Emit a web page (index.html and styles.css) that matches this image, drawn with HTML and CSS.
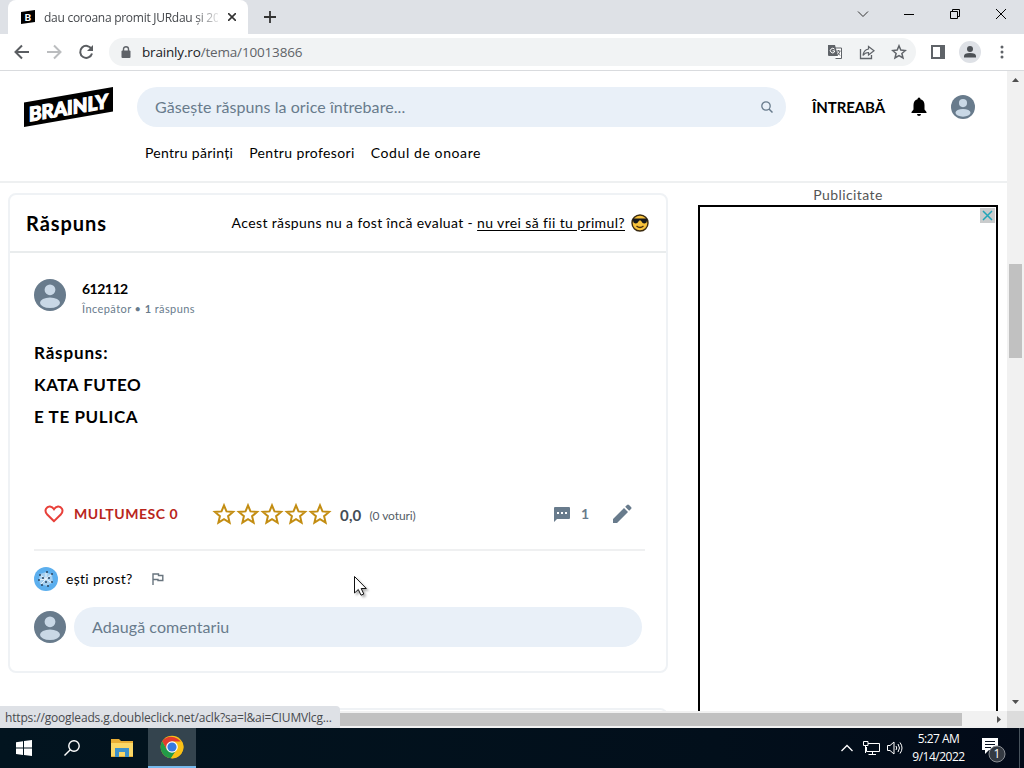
FILE: index.html
```html
<!DOCTYPE html>
<html lang="ro">
<head>
    <meta charset="UTF-8">
    <meta name="viewport" content="width=device-width, initial-scale=1.0">
    <title>dau coroana promit JURdau și 20</title>
    <link rel="stylesheet" href="styles.css">
</head>
<body>
    <svg width="0" height="0" class="defs">
        <symbol id="avatar" viewBox="0 0 32 32">
            <circle cx="16" cy="16" r="16" fill="#687b8c"/>
            <circle cx="16" cy="10.8" r="5.4" fill="#c9d8e6"/>
            <ellipse cx="16" cy="23.8" rx="10" ry="5.2" fill="#c9d8e6"/>
        </symbol>
        <symbol id="star" viewBox="0 0 24 24">
            <path d="M12 3.4l2.5 6 6.6.5-5 4.3 1.5 6.4-5.6-3.4-5.6 3.4 1.5-6.4-5-4.3 6.6-.5z" fill="none" stroke="#c38d12" stroke-width="2"/>
        </symbol>
    </svg>

    <div class="tab-strip">
        <div class="tab">
            <svg class="favicon" width="14" height="14" viewBox="0 0 14 14">
                <path d="M0 2L14 0V12L0 14Z" fill="#000"/>
                <text x="3.5" y="10.6" font-family="Lato" font-weight="900" font-size="10" fill="#fff">B</text>
            </svg>
            <span class="tab-title">dau coroana promit JURdau și 20</span>
            <svg class="tab-close" width="8" height="8" viewBox="0 0 8 8"><path d="M0 0L8 8M8 0L0 8" stroke="#333" stroke-width="1.6"/></svg>
        </div>
        <svg class="new-tab" width="12" height="12" viewBox="0 0 12 12"><path d="M6 0V12M0 6H12" stroke="#333" stroke-width="1.8"/></svg>
        <div class="window-buttons">
            <svg width="46" height="28" viewBox="0 0 46 28"><path d="M18 11.5L23 16.5L28 11.5" fill="none" stroke="#333"/></svg>
            <svg width="46" height="28" viewBox="0 0 46 28"><path d="M18 14.5H28" stroke="#000"/></svg>
            <svg width="46" height="28" viewBox="0 0 46 28"><path d="M18.5 11.5H25.500V18.500H18.500ZM20.500 11.500V9.500H27.500V16.500H25.500" fill="none" stroke="#000"/></svg>
            <svg width="46" height="28" viewBox="0 0 46 28"><path d="M18 9L28 19M28 9L18 19" stroke="#000"/></svg>
        </div>
    </div>

    <div class="toolbar">
        <svg width="16" height="16" viewBox="0 0 16 16"><path d="M15 8H2M8 1.500L1.500 8L8 14.500" fill="none" stroke="#5a5d61" stroke-width="2"/></svg>
        <svg width="16" height="16" viewBox="0 0 16 16"><path d="M1 8H14M8 1.500L14.500 8L8 14.500" fill="none" stroke="#bbbdbf" stroke-width="2"/></svg>
        <svg width="16" height="16" viewBox="0 0 16 16"><path d="M13.500 5A6 6 0 1 0 14 9.500" fill="none" stroke="#5a5d61" stroke-width="2"/><path d="M15 1V7H9Z" fill="#5a5d61"/></svg>
        <div class="address-bar">
            <svg class="lock" width="10" height="12" viewBox="0 0 10 12"><rect y="4.500" x=".5" width="9" height="7.500" rx="1" fill="#5f6368"/><path d="M2.500 5V3a2.500 2.300 0 0 1 5 0V5" fill="none" stroke="#5f6368" stroke-width="1.400"/></svg>
            <span class="url"><b>brainly.ro</b>/tema/10013866</span>
            <div class="address-icons">
                <svg width="16" height="16" viewBox="0 0 16 16">
                    <path d="M8 4H14.500V14.500H8.500" fill="#fff" stroke="#5f6368"/>
                    <path d="M1 1H8L11 12H2Q1 12 1 11Z" fill="#5f6368"/>
                    <path d="M7.500 5.200A2.300 2.300 0 1 0 7.500 8V6.800H5.500" fill="none" stroke="#fff"/>
                    <path d="M9.500 7H13.500M11.500 6V7M13 7Q12 10 10.500 11M10.500 8.500L13 11.500" fill="none" stroke="#5f6368"/>
                </svg>
                <svg width="16" height="16" viewBox="0 0 16 16"><path d="M1.500 5V14.500H12.500V11" fill="none" stroke="#5f6368" stroke-width="1.300"/><path d="M9.500 2.500L15 6.800L9.500 11V8.500Q6 8.500 4 11.500Q4.500 6 9.500 5Z" fill="none" stroke="#5f6368" stroke-width="1.200"/></svg>
                <svg width="16" height="16" viewBox="0 0 16 16"><path d="M8 1.800l1.800 4.300 4.600.4-3.500 3 1.100 4.500-4-2.400-4 2.400 1.100-4.500-3.500-3 4.600-.4z" fill="none" stroke="#5f6368" stroke-width="1.500"/></svg>
            </div>
        </div>
        <svg class="side-panel" width="14" height="14" viewBox="0 0 14 14"><path d="M1 1H13V13H1Z" fill="none" stroke="#5f6368" stroke-width="2"/><path d="M9 0H14V14H9Z" fill="#5f6368"/></svg>
        <svg class="profile" width="22" height="22" viewBox="0 0 22 22"><circle cx="11" cy="11" r="11" fill="#dee1e6"/><circle cx="11" cy="8" r="3" fill="#4d5156"/><path d="M5 16.500V15Q5 12 11 12T17 15V16.500Z" fill="#4d5156"/></svg>
        <svg class="menu" width="4" height="14" viewBox="0 0 4 14" fill="#5f6368"><circle cx="2" cy="2" r="1.500"/><circle cx="2" cy="7" r="1.500"/><circle cx="2" cy="12" r="1.500"/></svg>
    </div>

    <div class="viewport">
        <div class="page">
            <header class="site-header">
                <div class="header-top">
                    <svg class="logo" width="90" height="40" viewBox="0 0 90 40">
                        <path d="M0 15.500L89 0V24.500L0 40Z" fill="#000"/>
                        <text transform="translate(5 34.500) skewY(-9.800)" textLength="79" lengthAdjust="spacingAndGlyphs" font-family="Lato" font-weight="900" font-size="19.500" fill="#fff" stroke="#fff" stroke-width="1.200">BRAINLY</text>
                    </svg>
                    <div class="search">
                        <span>Găsește răspuns la orice întrebare...</span>
                        <svg width="12" height="12" viewBox="0 0 12 12"><circle cx="5" cy="5" r="4.200" fill="none" stroke="#687b8c" stroke-width="1.300"/><path d="M8 8L11.500 11.500" stroke="#687b8c" stroke-width="1.500"/></svg>
                    </div>
                    <span class="ask">ÎNTREABĂ</span>
                    <svg class="bell" width="16" height="20" viewBox="0 0 16 20"><path d="M8 .5Q9.500 .5 9.500 2.200Q13.500 3.500 13.500 8V12.500L15.500 15V16H.5V15L2.500 12.500V8Q2.500 3.500 6.500 2.200Q6.500 .5 8 .5ZM6 17H10Q10 19 8 19T6 17Z"/></svg>
                    <svg width="24" height="24"><use href="#avatar"/></svg>
                </div>
                <nav class="links">
                    <span class="link-parents">Pentru părinți</span>
                    <span class="link-teachers">Pentru profesori</span>
                    <span class="link-honor">Codul de onoare</span>
                </nav>
            </header>

            <div class="columns">
                <main>
                    <div class="answer">
                        <div class="answer-header">
                            <h2>Răspuns</h2>
                            <p class="rate-hint">Acest răspuns nu a fost încă evaluat - <u>nu vrei să fii tu primul?</u></p>
                            <svg class="emoji" width="18" height="18" viewBox="0 0 18 18">
                                <circle cx="9" cy="9" r="8" fill="#f9c33c" stroke="#3a2a10" stroke-width="1.400"/>
                                <path d="M1.500 4.500H16.500L15.500 8.500Q12 11 9.800 6.500H8.200Q6 11 2.500 8.500Z" fill="#17191c"/>
                                <path d="M5.500 12Q9 15 12.500 12" fill="none" stroke="#4b3210" stroke-width="1.300"/>
                            </svg>
                        </div>
                        <div class="answer-body">
                            <div class="author">
                                <svg width="32" height="32"><use href="#avatar"/></svg>
                                <div>
                                    <div class="author-name">612112</div>
                                    <div class="author-rank">Începător • <b>1</b> răspuns</div>
                                </div>
                            </div>
                            <div class="answer-text">
                                <p class="line-1">Răspuns:</p>
                                <p class="line-2">KATA FUTEO</p>
                                <p class="line-3">E TE PULICA</p>
                            </div>
                            <div class="actions">
                                <svg class="heart" width="20" height="18" viewBox="0 0 20 18"><path d="M10 16.200L3 9.200C-.5 5 3 1.200 6 1.500Q8.500 1.800 10 4.200Q11.500 1.800 14 1.500C17 1.200 20.500 5 17 9.200Z" fill="none" stroke="#e8403a" stroke-width="2"/></svg>
                                <span class="thanks">MULȚUMESC 0</span>
                                <div class="stars">
                                    <svg width="24" height="24"><use href="#star"/></svg>
                                    <svg width="24" height="24"><use href="#star"/></svg>
                                    <svg width="24" height="24"><use href="#star"/></svg>
                                    <svg width="24" height="24"><use href="#star"/></svg>
                                    <svg width="24" height="24"><use href="#star"/></svg>
                                </div>
                                <span class="score">0,0</span>
                                <span class="votes">(0 voturi)</span>
                                <svg class="bubble" width="16" height="16" viewBox="0 0 16 16"><path d="M1 1H15Q16 1 16 2V12Q16 13 15 13H3L0 16V2Q0 1 1 1Z" fill="#687b8c"/><path d="M3 6H5V8H3ZM7 6H9V8H7ZM11 6H13V8H11Z" fill="#fff"/></svg>
                                <span class="comment-count">1</span>
                                <svg class="pencil" width="20" height="20" viewBox="0 0 20 20"><path d="M1 15L12 4L16 8L5 19H1ZM13.200 2.800L15 1Q16 0 17 1L19 3Q20 4 19 5L17.200 6.800Z" fill="#687b8c"/></svg>
                            </div>
                            <div class="comment">
                                <svg width="24" height="24" viewBox="0 0 24 24">
                                    <circle cx="12" cy="12" r="12" fill="#5cafee"/>
                                    <path d="M6 7L12 5L18 8L19 15L13 19L6 17L5 12Z" fill="#a5d0f1"/>
                                    <path d="M6 8L12 12L18 7M12 12L18 16M12 12L7 17M12 12V6M12 12L5 13" fill="none" stroke="#e8f2fa"/>
                                    <g fill="#29435f"><circle cx="6" cy="8" r="1"/><circle cx="13" cy="5" r="1"/><circle cx="18" cy="7" r="1"/><circle cx="9" cy="11" r="1"/><circle cx="15" cy="11" r="1"/><circle cx="5" cy="13" r="1"/><circle cx="12" cy="15" r="1"/><circle cx="18" cy="15" r="1"/><circle cx="8" cy="18" r="1"/><circle cx="14" cy="19" r="1"/></g>
                                </svg>
                                <span>ești prost?</span>
                                <svg class="flag" width="12" height="12" viewBox="0 0 12 12"><path d="M1 12V1H6.500V2.500H10.800V7.500H6V6.500H1" fill="none" stroke="#68747e" stroke-width="1.400"/></svg>
                            </div>
                            <div class="add-comment">
                                <svg width="32" height="32"><use href="#avatar"/></svg>
                                <div class="comment-input"><span>Adaugă comentariu</span></div>
                            </div>
                        </div>
                    </div>
                    <div class="next-box"></div>
                </main>
                <aside class="ad">
                    <div class="ad-label">Publicitate</div>
                    <div class="ad-frame">
                        <svg width="15" height="15" viewBox="0 0 15 15"><path d="M0 0H15V15H0Z" fill="#c9cbcc"/><path d="M3 3L12 12M12 3L3 12" stroke="#20a5b8" stroke-width="1.500"/></svg>
                    </div>
                </aside>
            </div>
        </div>
        <div class="scroll-y">
            <svg width="17" height="17" viewBox="0 0 17 17"><path d="M5 11L8.500 7L12 11Z" fill="#505050"/></svg>
            <div class="thumb-y"></div>
            <svg class="down" width="17" height="17" viewBox="0 0 17 17"><path d="M5 6L8.500 10L12 6Z" fill="#505050"/></svg>
        </div>
        <div class="scroll-x">
            <div class="thumb-x"></div>
            <svg width="17" height="17" viewBox="0 0 17 17"><path d="M7 5L11 8.500L7 12Z" fill="#505050"/></svg>
        </div>
        <div class="corner"></div>
        <div class="status"><span>https://googleads.g.doubleclick.net/aclk?sa=l&amp;ai=CIUMVlcg...</span></div>
        <svg class="cursor" width="18" height="24" viewBox="0 0 18 24"><path d="M.5 .5V17L4.300 13.500L7 19.200L9.800 18L7.200 12.500H12.300Z" fill="#fff" stroke="#111"/></svg>
    </div>

    <footer class="taskbar">
        <div class="task"><svg width="16" height="16" viewBox="0 0 16 16" fill="#fff"><path d="M0 2.200L7 1.200V7.600H0ZM8 1L16 0V7.600H8ZM0 8.500H7V15L0 14ZM8 8.500H16V16L8 15Z"/></svg></div>
        <div class="task"><svg width="16" height="16" viewBox="0 0 16 16" fill="none" stroke="#fff" stroke-width="1.400"><circle cx="10" cy="6" r="5.200"/><path d="M6.300 9.700L.5 15.500"/></svg></div>
        <div class="task files"><svg class="folder" width="22" height="18" viewBox="0 0 22 18"><path d="M0 0H8L10 2H22V18H0Z" fill="#e9ae35"/><path d="M0 4H22V17H0Z" fill="#fbd766"/><path d="M4 9H18V18H14V13H8V18H4Z" fill="#3e91ca"/></svg></div>
        <div class="task active"><svg width="24" height="24" viewBox="0 0 24 24">
            <circle cx="12" cy="12" r="11.300" fill="#fbc116"/>
            <path d="M12 12H22.500A11.300 11.300 0 0 0 2.200 6.300L6.800 15Z" fill="#e33b2e"/>
            <path d="M2.200 6.300A11.300 11.300 0 0 0 11 23.300L16.800 14.500L12 12L7 15Z" fill="#229b48"/>
            <path d="M12 6.500H22A11.300 11.300 0 0 1 11 23.300L16.800 14.500Z" fill="#fbc116"/>
            <circle cx="12" cy="12" r="5.800" fill="#fff"/><circle cx="12" cy="12" r="4.600" fill="#3779e0"/>
        </svg></div>
        <div class="tray">
            <svg class="chevron" width="12" height="8" viewBox="0 0 12 8"><path d="M.5 7L6 1.500L11.500 7" fill="none" stroke="#fff" stroke-width="1.300"/></svg>
            <svg class="network" width="17" height="15" viewBox="0 0 17 15"><path d="M5 2.500H16.500V10.500H3.500V6M.5 .5H5V4.500H.5ZM2.500 4.500V12M9.500 10.500V13.500M5.500 13.500H13" fill="none" stroke="#fff"/></svg>
            <svg class="volume" width="16" height="14" viewBox="0 0 16 14"><path d="M.5 4.500H3L7 1V13L3 9.500H.5ZM9 5Q10.500 7 9 9M11 3Q14 7 11 11M13 1.500Q17 7 13 12.500" fill="none" stroke="#fff"/></svg>
            <div class="clock"><span class="time">5:27 AM</span><span class="date">9/14/2022</span></div>
            <svg class="notify" width="26" height="26" viewBox="0 0 26 26">
                <path d="M1 1H17V13H8L4 17V13H1Z" fill="#fff"/><path d="M4 4.500H14M4 7.500H14M4 10.500H10" stroke="#06101f"/>
                <circle cx="16" cy="17" r="8" fill="#343a42" stroke="#8b8f95"/>
                <text x="16" y="21.300" text-anchor="middle" font-family="Open Sans" font-size="12" fill="#fff">1</text>
            </svg>
            <div class="show-desktop"></div>
        </div>
    </footer>
</body>
</html>
```
FILE: styles.css
```css
* {
    box-sizing: border-box;
}
body {
    margin: 0;
    width: 1024px;
    height: 768px;
    overflow: hidden;
    display: flex;
    flex-direction: column;
    background: #fff;
    font-family: Lato, "Liberation Sans", sans-serif;
    color: #000;
}
svg {
    display: block;
    flex-shrink: 0;
}
span, p, h2 {
    white-space: nowrap;
}
.defs {
    position: absolute;
}

/* browser */
.tab-strip {
    display: flex;
    height: 34px;
    background: #dee1e6;
    font-family: "Open Sans", sans-serif;
}
.tab {
    display: flex;
    align-items: center;
    width: 240px;
    margin-left: 8px;
    padding-left: 13px;
    background: #fff;
    border-radius: 8px 8px 0 0;
}
.tab-title {
    width: 174px;
    margin-left: 9px;
    overflow: hidden;
    font-size: 12px;
    letter-spacing: -0.27px;
    color: #45484c;
    -webkit-mask-image: linear-gradient(to right, #000 150px, transparent 178px);
}
.tab-close {
    margin-left: 10px;
}
.new-tab {
    margin: 11px 0 0 16px;
}
.window-buttons {
    display: flex;
    margin-left: auto;
}
.toolbar {
    display: flex;
    align-items: center;
    height: 37px;
    padding-left: 14px;
    gap: 16px;
    border-bottom: 1px solid #d9dbde;
    font-family: "Open Sans", sans-serif;
}
.address-bar {
    display: flex;
    align-items: center;
    width: 807px;
    height: 28px;
    margin-left: -1px;
    padding: 0 9px 0 12px;
    border-radius: 14px;
    background: #f1f3f4;
}
.address-icons {
    display: flex;
    gap: 16px;
    margin-left: auto;
}
.url {
    margin-left: 11px;
    font-size: 13.5px;
    letter-spacing: -0.17px;
    color: #5f6368;
}
.url b {
    font-weight: 400;
    color: #202124;
}
.side-panel {
    margin-left: -1px;
}
.profile {
    margin-left: -2px;
}
.menu {
    margin-left: 3px;
}
.viewport {
    position: relative;
    display: grid;
    grid-template-columns: 1007px 17px;
    grid-template-rows: 640px 17px;
    height: 657px;
}
.page {
    overflow: hidden;
}

/* site header */
.site-header {
    height: 112px;
    border-bottom: 2px solid #eef0f1;
}
.header-top {
    display: flex;
    align-items: center;
    height: 72px;
    padding-left: 24px;
}
.search {
    display: flex;
    align-items: center;
    justify-content: space-between;
    width: 649px;
    height: 40px;
    margin-left: 23px;
    padding: 0 13px 0 18px;
    border-radius: 20px;
    background: #e9f0f8;
    font-size: 16px;
    letter-spacing: 0.07px;
    color: #687b8c;
}
.search span {
    margin-top: -2px;
}
.ask {
    margin-left: 26px;
    font-size: 15px;
    font-weight: 700;
    letter-spacing: -0.1px;
}
.bell {
    margin: 0 24px 0 auto;
}
.bell + svg {
    margin-right: 32px;
}
.links {
    display: flex;
    gap: 16px;
    padding-left: 145px;
    font-size: 14px;
    line-height: 20px;
}
.link-parents {
    letter-spacing: 0.3px;
}
.link-teachers {
    letter-spacing: 0.37px;
}
.link-honor {
    letter-spacing: 0.6px;
}

/* answer */
.columns {
    display: flex;
    height: 528px;
}
.answer {
    width: 660px;
    height: 480px;
    margin: 10px 0 0 8px;
    border: 2px solid #eff2f5;
    border-radius: 8px;
}
.answer-header {
    display: flex;
    align-items: center;
    height: 58px;
    padding: 0 17px 0 16px;
    border-bottom: 2px solid #e9eced;
}
.answer-header h2 {
    margin: 0;
    font-size: 20px;
    letter-spacing: 0.95px;
}
.rate-hint {
    margin: -2px 6px 0 auto;
    font-size: 14px;
    letter-spacing: 0.37px;
}
.rate-hint u {
    text-underline-offset: 2px;
}
.emoji {
    margin-top: -1px;
}
.answer-body {
    padding: 26px 24px 0;
}
.author {
    display: flex;
    gap: 16px;
    height: 40px;
}
.author-name {
    margin-top: -1px;
    font-size: 14px;
    font-weight: 700;
    line-height: 22px;
    letter-spacing: -0.5px;
}
.author-rank {
    font-size: 11px;
    line-height: 18px;
    letter-spacing: 0.42px;
    color: #687b8c;
    white-space: nowrap;
}
.answer-text {
    height: 130px;
    margin-top: 18px;
    font-size: 17px;
    font-weight: 700;
}
.answer-text p {
    margin: 0;
    line-height: 32px;
}
.line-1 {
    letter-spacing: 0.85px;
}
.line-2 {
    letter-spacing: 0.5px;
}
.line-3 {
    letter-spacing: 0.6px;
}
.actions {
    display: flex;
    align-items: center;
    height: 71px;
    padding: 0 13px 2px 10px;
    margin-top: 13px;
    border-bottom: 2px solid #eff0f1;
    margin-right: -3px;
}
.thanks {
    width: 104px;
    margin-left: 10px;
    font-size: 14px;
    font-weight: 700;
    letter-spacing: 0.55px;
    color: #b9261c;
}
.stars {
    display: flex;
    margin-left: 34px;
}
.score {
    margin: 2px 0 0 8px;
    font-size: 15px;
    font-weight: 700;
    letter-spacing: 0.2px;
    color: #444d56;
}
.votes {
    margin: 3px 0 0 8px;
    font-size: 12px;
    letter-spacing: -0.1px;
    color: #555e67;
}
.bubble {
    margin-left: auto;
}
.comment-count {
    margin-left: 11px;
    font-size: 14px;
    font-weight: 700;
    color: #687b8c;
}
.pencil {
    margin-left: 23px;
}
.comment {
    display: flex;
    align-items: center;
    height: 24px;
    margin-top: 16px;
    font-size: 14px;
    letter-spacing: 0.3px;
}
.comment span {
    margin: -1px 0 0 8px;
}
.flag {
    margin-left: 19px;
}
.add-comment {
    display: flex;
    align-items: center;
    gap: 8px;
    margin-top: 16px;
}
.comment-input {
    flex: none;
    width: 568px;
    height: 40px;
    padding-left: 18px;
    border-radius: 20px;
    background: #e9f0f8;
    font-size: 16px;
    line-height: 39px;
    letter-spacing: 0.07px;
    color: #687b8c;
}
.next-box {
    height: 20px;
    margin: 35px 0 0 8px;
    border: 2px solid #eff2f5;
    border-radius: 8px;
}

/* ad */
.ad {
    width: 300px;
    margin-left: 30px;
}
.ad-label {
    height: 22px;
    font-size: 14px;
    line-height: 24px;
    letter-spacing: 0.4px;
    text-align: center;
    color: #555;
}
.ad-frame {
    display: flex;
    justify-content: flex-end;
    height: 520px;
    padding: 1px;
    border: 2px solid #000;
}

/* scrollbars */
.scroll-y {
    display: flex;
    flex-direction: column;
    background: #f1f1f1;
}
.thumb-y {
    width: 13px;
    height: 94px;
    margin: 176px 0 0 2px;
    background: #c1c1c1;
}
.down {
    margin-top: auto;
}
.scroll-x {
    display: flex;
    align-items: center;
    justify-content: space-between;
    background: #f1f1f1;
}
.thumb-x {
    width: 945px;
    height: 13px;
    margin-left: 17px;
    background: #c1c1c1;
}
.corner {
    background: #dcdcdc;
}
.status {
    position: absolute;
    left: 0;
    bottom: 0;
    width: 340px;
    height: 22px;
    padding-left: 5px;
    border-radius: 0 4px 0 0;
    background: #dee1e6;
    font-family: "Open Sans", sans-serif;
    font-size: 12px;
    line-height: 23px;
    letter-spacing: -0.16px;
    color: #474a4e;
}
.cursor {
    position: absolute;
    left: 354px;
    top: 505px;
    filter: drop-shadow(2px 2px 1px rgba(0, 0, 0, 0.3));
}

/* taskbar */
.taskbar {
    display: flex;
    height: 40px;
    background: linear-gradient(to right, #02141f, #020f1b 70%, #020a18);
    font-family: "Open Sans", sans-serif;
}
.task {
    display: flex;
    align-items: center;
    justify-content: center;
    width: 48px;
}
.files {
    width: 52px;
}
.active {
    background: #34444e;
    border-bottom: 2px solid #76b9ed;
}
.tray {
    display: flex;
    align-items: center;
    width: 183px;
    margin-left: auto;
}
.network {
    margin-left: 10px;
}
.volume {
    margin-left: 7px;
}
.clock {
    display: flex;
    flex-direction: column;
    align-items: center;
    width: 53px;
    margin-left: 9px;
    font-size: 12px;
    line-height: 18px;
    letter-spacing: -0.5px;
    color: #fff;
}
.notify {
    margin: 4px 0 0 16px;
}
.show-desktop {
    height: 40px;
    margin-left: 12px;
    border-left: 1px solid #48535d;
}
```
